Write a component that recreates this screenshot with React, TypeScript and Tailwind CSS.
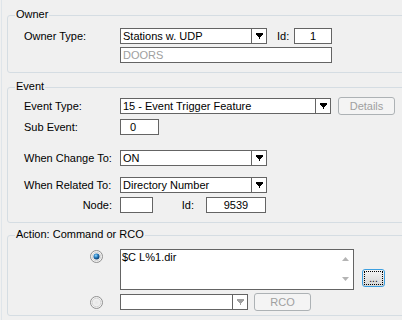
import React from 'react';

const font = { fontFamily: '"Liberation Sans", Arial, sans-serif' };

function Arrow({ disabled = false }: { disabled?: boolean }) {
  const c = disabled ? '#a0a0a0' : '#000';
  return (
    <svg width="7" height="6" viewBox="0 0 7 6" shapeRendering="crispEdges">
      <rect x="0" y="0" width="7" height="2" fill={c} />
      <rect x="1" y="2" width="5" height="1" fill={c} />
      <rect x="2" y="3" width="3" height="1" fill={c} />
      <rect x="3" y="4" width="1" height="2" fill={c} />
    </svg>
  );
}

function Combo({ value, width, disabled = false }: { value: string; width: string; disabled?: boolean }) {
  return (
    <div className={`${width} h-4 flex border border-[#646464] bg-white`}>
      <div className="flex-1 pl-[2px] leading-[14px] text-black truncate">{value}</div>
      <div className="w-[15px] flex items-center justify-center border-l border-[#646464]">
        <Arrow disabled={disabled} />
      </div>
    </div>
  );
}

function Field({ value, width, className = '' }: { value: string; width: string; className?: string }) {
  return (
    <div className={`${width} h-4 border border-[#646464] bg-white leading-[14px] ${className}`}>{value}</div>
  );
}

function Group({ title, className, children }: { title: string; className: string; children: React.ReactNode }) {
  return (
    <div className={`relative w-[420px] border border-[#d5dde3] rounded-[3px] ${className}`}>
      <span className="absolute left-[7px] -top-[8px] px-[1px] bg-[#f0f0f0] leading-[13px] text-black">{title}</span>
      {children}
    </div>
  );
}

function Radio({ checked }: { checked: boolean }) {
  return (
    <svg width="13" height="13" viewBox="0 0 13 13">
      <defs>
        <radialGradient id={checked ? 'rg1' : 'rg0'} cx="0.5" cy="0.5" r="0.5">
          <stop offset="0" stopColor="#e6e6e6" />
          <stop offset="1" stopColor="#f8f8f8" />
        </radialGradient>
        <radialGradient id="dot" cx="0.4" cy="0.35" r="0.6">
          <stop offset="0" stopColor="#9fd8f7" />
          <stop offset="0.5" stopColor="#2a84c8" />
          <stop offset="1" stopColor="#0c3f72" />
        </radialGradient>
      </defs>
      <circle cx="6.5" cy="6.5" r="6" fill={`url(#${checked ? 'rg1' : 'rg0'})`} stroke="#8f8f8f" strokeWidth="1" />
      <circle cx="6.5" cy="6.5" r="4.3" fill="none" stroke="#d2d2d2" strokeWidth="1" />
      {checked && <circle cx="6.5" cy="6.5" r="3" fill="url(#dot)" />}
    </svg>
  );
}

function Btn({ label, width }: { label: string; width: string }) {
  return (
    <div className={`${width} h-[18px] rounded-[3px] border border-[#adb2b5] bg-[#f4f4f4] flex items-center justify-center text-[#a0a0a0]`}>
      {label}
    </div>
  );
}

export default function App() {
  return (
    <div className="w-[402px] h-[320px] overflow-hidden bg-[#f0f0f0] text-[11px] text-black" style={font}>
      <div className="ml-px h-full border-l border-[#dfe5ea] pl-[5px] pt-[15px] flex flex-col">
        {/* Owner */}
        <Group title="Owner" className="h-[58px] pt-[12px] pl-[16px]">
          <div className="flex items-center h-4">
            <span className="w-[96px]">Owner Type:</span>
            <Combo value="Stations w. UDP" width="w-[147px]" />
            <span className="ml-[10px] w-[17px]">Id:</span>
            <Field value="1" width="w-[38px]" className="text-center" />
          </div>
          <div className="flex items-center h-4 mt-[3px]">
            <span className="w-[96px]" />
            <Field value="DOORS" width="w-[212px]" className="pl-[2px] text-[#a0a0a0] border-[#8a8a8a]" />
          </div>
        </Group>

        {/* Event */}
        <Group title="Event" className="mt-[14px] h-[136px] pt-[10px] pl-[16px]">
          <div className="flex items-center h-4">
            <span className="w-[96px]">Event Type:</span>
            <Combo value="15 - Event Trigger Feature" width="w-[211px]" />
            <div className="ml-[7px]">
              <Btn label="Details" width="w-[57px]" />
            </div>
          </div>
          <div className="flex items-center h-4 mt-[5px]">
            <span className="w-[96px]">Sub Event:</span>
            <Field value="0" width="w-[39px]" className="pl-[9px]" />
          </div>
          <div className="flex items-center h-4 mt-[15px]">
            <span className="w-[96px]">When Change To:</span>
            <Combo value="ON" width="w-[147px]" />
          </div>
          <div className="flex items-center h-4 mt-[11px]">
            <span className="w-[96px]">When Related To:</span>
            <Combo value="Directory Number" width="w-[147px]" />
          </div>
          <div className="flex items-center h-4 mt-[4px]">
            <span className="w-[96px] text-right pr-[8px]">Node:</span>
            <Field value="" width="w-[33px]" />
            <span className="w-[53px] text-right pr-[12px]">Id:</span>
            <Field value="9539" width="w-[60px]" className="text-center" />
          </div>
        </Group>

        {/* Action */}
        <Group title="Action: Command or RCO" className="mt-[12px] h-[81px] pt-[13px] pl-[82px]">
          <div className="flex items-start">
            <div className="w-[13px] mt-[1px]">
              <Radio checked />
            </div>
            <div className="ml-[17px] w-[234px] h-[41px] border border-[#646464] bg-white flex">
              <div className="flex-1 pl-[1px] leading-[14px]">$C L%1.dir</div>
              <div className="w-[16px] flex flex-col items-center justify-between pt-[7px] pb-[8px]">
                <svg width="7" height="4" viewBox="0 0 7 4"><path d="M3.5 0L7 4H0z" fill="#b4b4b4" /></svg>
                <svg width="7" height="4" viewBox="0 0 7 4"><path d="M0 0h7L3.5 4z" fill="#b4b4b4" /></svg>
              </div>
            </div>
            <div className="ml-[8px] mt-[20px] w-[23px] h-[18px] rounded-[3px] border border-[#3c9fe0] p-[1px] bg-linear-to-b from-[#f4f4f4] to-[#d6d6d6]">
              <div className="w-full h-full border border-dotted border-black flex items-end justify-center leading-[10px] text-[10px]">...</div>
            </div>
          </div>
          <div className="flex items-center h-[18px] mt-[3px]">
            <div className="w-[13px]">
              <Radio checked={false} />
            </div>
            <div className="ml-[17px]">
              <Combo value="" width="w-[128px]" disabled />
            </div>
            <div className="ml-[6px]">
              <Btn label="RCO" width="w-[57px]" />
            </div>
          </div>
        </Group>
      </div>
    </div>
  );
}
